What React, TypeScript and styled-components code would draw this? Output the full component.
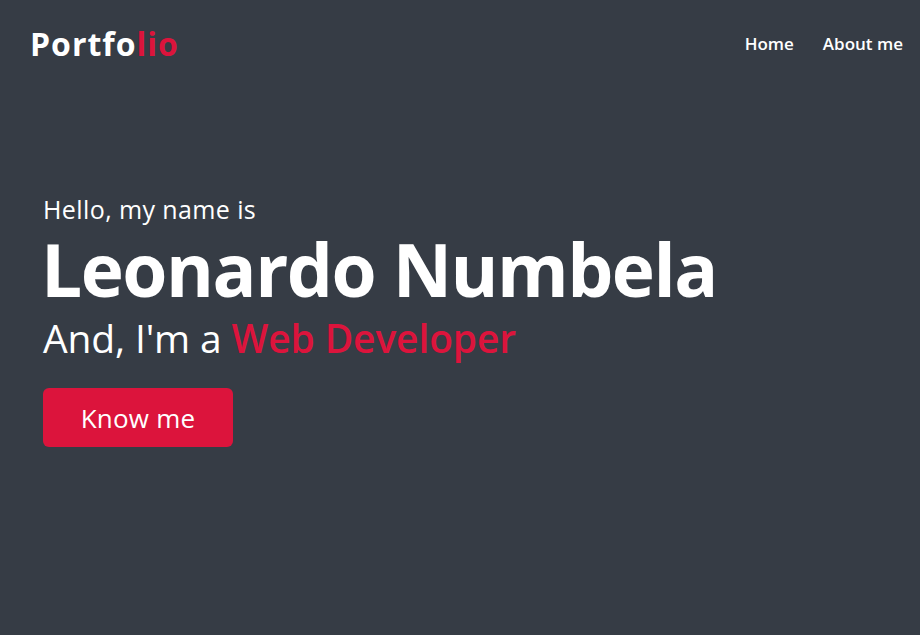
import React from 'react';
import styled, { createGlobalStyle } from 'styled-components';

const GlobalStyle = createGlobalStyle`
  * {
    box-sizing: border-box;
  }
  body {
    margin: 0;
    background-color: #363c45;
    font-family: 'Open Sans', 'Noto Sans', sans-serif;
    color: #fff;
  }
`;

const Page = styled.div`
  min-height: 635px;
  background-color: #363c45;
`;

const Navbar = styled.nav`
  height: 86px;
  padding: 0 17px 0 30px;
  display: flex;
  align-items: center;
  justify-content: space-between;
`;

const Logo = styled.a`
  font-size: 32px;
  font-weight: 700;
  color: #fff;
  letter-spacing: 1px;
  text-decoration: none;

  span {
    color: #dc143c;
  }
`;

const Menu = styled.ul`
  list-style: none;
  margin: 0;
  padding: 0;
  display: flex;
  gap: 29px;
`;

const MenuLink = styled.a`
  font-size: 17px;
  font-weight: 600;
  color: #fff;
  text-decoration: none;
`;

const Hero = styled.section`
  padding: 106px 43px 0;
`;

const Greeting = styled.div`
  font-size: 25px;
  line-height: 34px;
  letter-spacing: 0.4px;
`;

const Name = styled.h1`
  margin: 0 0 0 -2px;
  font-size: 73px;
  font-weight: 700;
  line-height: 85px;
  letter-spacing: -1.5px;
`;

const Role = styled.div`
  font-size: 39px;
  line-height: 54px;
  letter-spacing: -0.15px;

  span {
    color: #dc143c;
    font-weight: 600;
  }
`;

const Button = styled.a`
  display: inline-flex;
  align-items: center;
  justify-content: center;
  margin-top: 23px;
  width: 190px;
  height: 59px;
  border-radius: 6px;
  background-color: #dc143c;
  color: #fff;
  font-size: 26px;
  letter-spacing: 0.2px;
  text-decoration: none;
`;

const App: React.FC = () => {
  return (
    <Page>
      <GlobalStyle />
      <Navbar>
        <Logo href="#">
          Portfo<span>lio</span>
        </Logo>
        <Menu>
          <li>
            <MenuLink href="#">Home</MenuLink>
          </li>
          <li>
            <MenuLink href="#">About me</MenuLink>
          </li>
        </Menu>
      </Navbar>
      <Hero>
        <Greeting>Hello, my name is</Greeting>
        <Name>Leonardo Numbela</Name>
        <Role>
          And, I'm a <span>Web Developer</span>
        </Role>
        <Button href="#">Know me</Button>
      </Hero>
    </Page>
  );
};

export default App;
